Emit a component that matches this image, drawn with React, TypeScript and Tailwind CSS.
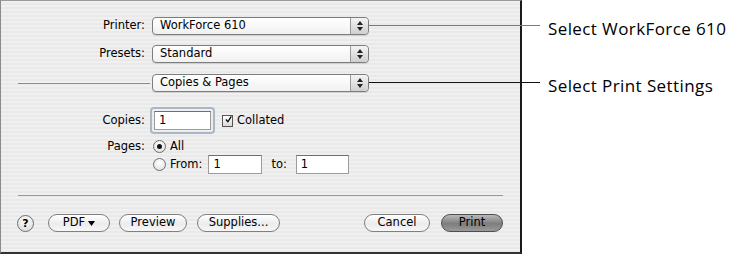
import React from 'react'

const ui = { fontFamily: '"DejaVu Sans", "Liberation Sans", sans-serif' }
const note = { fontFamily: '"Open Sans", "Liberation Sans", sans-serif' }

function Stepper() {
  return (
    <div className="flex h-full w-[18px] flex-col items-center justify-center gap-[2px] rounded-r-[4px] border-l border-[#9a9a9a] bg-[linear-gradient(180deg,#f4f4f4,#cfcfcf)]">
      <svg width="6" height="4" viewBox="0 0 6 4">
        <path d="M3 0 L6 4 L0 4 Z" fill="#222" />
      </svg>
      <svg width="6" height="4" viewBox="0 0 6 4">
        <path d="M0 0 L6 0 L3 4 Z" fill="#222" />
      </svg>
    </div>
  )
}

function Popup({ label }: { label: string }) {
  return (
    <div className="flex h-[18px] w-[217px] items-center rounded-[4px] border border-[#7d7d7d] bg-[linear-gradient(180deg,#ffffff,#f1f1f1)] shadow-[0_1px_0_#d0d0d0]">
      <span className="flex-1 pl-[7px] text-[11.5px] leading-none text-black">{label}</span>
      <Stepper />
    </div>
  )
}

function Field({ value, className = '' }: { value: string; className?: string }) {
  return (
    <div
      className={`flex h-[19px] items-center border border-[#9c9c9c] border-t-[#6e6e6e] bg-white pl-[4px] text-[11.5px] leading-none ${className}`}
    >
      {value}
    </div>
  )
}

function Radio({ on }: { on?: boolean }) {
  return (
    <span className="flex h-[13px] w-[13px] items-center justify-center rounded-full border border-[#6f6f6f] bg-[radial-gradient(circle_at_50%_35%,#ffffff,#dcdcdc)]">
      {on && <span className="h-[5px] w-[5px] rounded-full bg-[#111]" />}
    </span>
  )
}

function Pill({ label, width, dark }: { label: React.ReactNode; width: string; dark?: boolean }) {
  return (
    <div
      className={`flex h-[18px] items-center justify-center rounded-full border text-[11.5px] leading-none ${width} ${
        dark
          ? 'border-[#4e4e4e] bg-[linear-gradient(180deg,#b9b9b9,#7d7d7d_55%,#9a9a9a)] text-black'
          : 'border-[#7f7f7f] bg-[linear-gradient(180deg,#ffffff,#ececec_55%,#f7f7f7)] text-black'
      }`}
    >
      {label}
    </div>
  )
}

export default function App() {
  return (
    <div className="relative flex h-[255px] w-[731px] bg-white" style={ui}>
      <div className="flex h-[254px] w-[522px] flex-col border-t border-l border-r-2 border-b-2 border-t-[#9a9a9a] border-l-[#8a8a8a] border-r-[#1a1a1a] border-b-[#333] bg-[repeating-linear-gradient(180deg,#f0f0f0_0px,#f0f0f0_2px,#e9e9e9_2px,#e9e9e9_4px)]">
        <div className="mt-[16px] flex items-center">
          <span className="w-[144px] text-right text-[11.5px] leading-none">Printer:</span>
          <div className="ml-[7px]">
            <Popup label="WorkForce 610" />
          </div>
        </div>
        <div className="mt-[10px] flex items-center">
          <span className="w-[144px] text-right text-[11.5px] leading-none">Presets:</span>
          <div className="ml-[7px]">
            <Popup label="Standard" />
          </div>
        </div>
        <div className="mt-[11px] flex items-center">
          <div className="ml-[17px] h-px w-[132px] bg-[#8c8c8c]" />
          <div className="ml-[2px]">
            <Popup label="Copies &amp; Pages" />
          </div>
        </div>

        <div className="mt-[17px] flex items-center">
          <span className="w-[144px] text-right text-[11.5px] leading-none">Copies:</span>
          <div className="ml-[7px] rounded-[2px] p-[2px] shadow-[0_0_0_2px_#a9b7c9]">
            <Field value="1" className="w-[57px]" />
          </div>
          <span className="ml-[9px] flex h-[12px] w-[11px] items-center justify-center border border-[#555] bg-[linear-gradient(180deg,#fff,#d8d8d8)]">
            <svg width="11" height="11" viewBox="0 0 11 11" className="-mt-[3px] ml-[2px]">
              <path d="M1.5 5.5 L4.5 9 L10 0.5" stroke="#000" strokeWidth="2" fill="none" />
            </svg>
          </span>
          <span className="ml-[4px] text-[11.5px] leading-none">Collated</span>
        </div>

        <div className="mt-[8px] flex">
          <span className="mt-[1px] w-[144px] text-right text-[11.5px] leading-none">Pages:</span>
          <div className="ml-[8px] flex flex-col">
            <div className="flex items-center">
              <Radio on />
              <span className="ml-[4px] text-[11.5px] leading-none">All</span>
            </div>
            <div className="mt-[2px] flex items-center">
              <Radio />
              <span className="ml-[4px] text-[11.5px] leading-none">From:</span>
              <Field value="1" className="ml-[6px] w-[54px]" />
              <span className="ml-[9px] text-[11.5px] leading-none">to:</span>
              <Field value="1" className="ml-[9px] w-[53px]" />
            </div>
          </div>
        </div>

        <div className="ml-[17px] mt-[21px] h-px w-[485px] bg-[#9a9a9a]" />

        <div className="mt-[18px] flex items-center">
          <span className="ml-[16px] flex h-[17px] w-[17px] items-center justify-center rounded-full border border-[#6f6f6f] bg-[radial-gradient(circle_at_50%_30%,#ffffff,#d6d6d6)] text-[11px] font-bold leading-none">
            ?
          </span>
          <div className="ml-[14px]">
            <Pill
              width="w-[62px]"
              label={
                <span className="flex items-center gap-[3px]">
                  PDF
                  <svg width="7" height="5" viewBox="0 0 7 5">
                    <path d="M0 0 L7 0 L3.5 5 Z" fill="#000" />
                  </svg>
                </span>
              }
            />
          </div>
          <div className="ml-[9px]">
            <Pill width="w-[68px]" label="Preview" />
          </div>
          <div className="ml-[10px]">
            <Pill width="w-[83px]" label="Supplies..." />
          </div>
          <div className="ml-[84px]">
            <Pill width="w-[66px]" label="Cancel" />
          </div>
          <div className="ml-[11px]">
            <Pill width="w-[62px]" label="Print" dark />
          </div>
        </div>
      </div>

      <div className="ml-[26px] flex flex-col text-[17px] leading-none tracking-[0.4px] text-black" style={note}>
        <span className="mt-[20px]">Select WorkForce 610</span>
        <span className="mt-[40px]">Select Print Settings</span>
      </div>

      <div className="absolute left-[369px] top-[25px] h-px w-[171px] bg-[#7a7a7a]" />
      <div className="absolute left-[369px] top-[82px] h-px w-[171px] bg-[#111]" />
    </div>
  )
}
